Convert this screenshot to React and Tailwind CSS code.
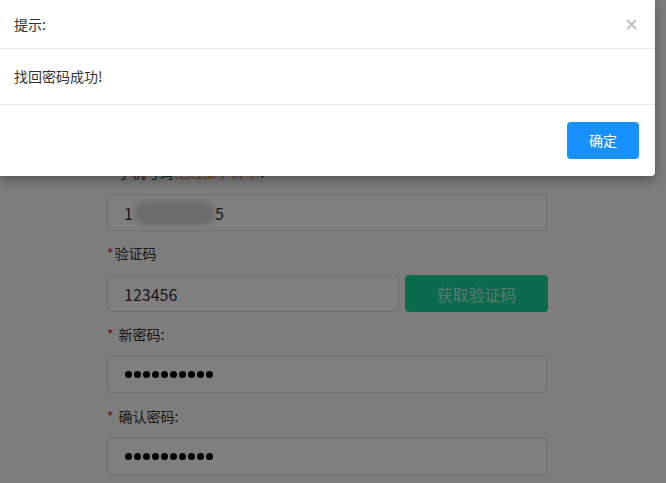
import React from "react";

function Dots() {
  return (
    <div className="flex items-center gap-[2px]">
      {Array.from({ length: 10 }).map((_, i) => (
        <span key={i} className="block w-[7px] h-[7px] rounded-full bg-black" />
      ))}
    </div>
  );
}

function Label({ children, star = true, space = false }) {
  return (
    <div className="h-[22px] flex items-center text-[14px] text-[#333]">
      {star && <span className="text-[#e02020] mr-[1px]">*</span>}
      {space && <span className="w-[4px]" />}
      {children}
    </div>
  );
}

export default function App() {
  const font = { fontFamily: '"Microsoft YaHei", "Noto Sans CJK SC", "Liberation Sans", sans-serif' };
  return (
    <div className="relative w-[666px] h-[483px] overflow-hidden bg-[#fafafa]" style={font}>
      {/* page form */}
      <div className="pl-[107px] pt-[161px] w-[547px] flex flex-col">
        <div className="h-[22px] flex items-center text-[14px] text-[#333]">
          <span className="text-[#e02020] mr-[4px]">*</span>
          手机号码<span className="text-[#e6772e] text-[13px]">(已注册手机号)</span>:
        </div>
        <div className="mt-[11px] h-[37px] w-[440px] border border-[#dcdfe6] rounded-[4px] bg-white flex items-center pl-[16px] text-[16px] text-[#333]">
          1
          <span className="inline-block w-[80px] h-[24px] rounded-[10px] bg-[#dadada] blur-[2px] mx-[1px]" />
          5
        </div>
        <div className="mt-[11px]">
          <Label>验证码</Label>
        </div>
        <div className="mt-[11px] flex gap-[6px] w-[441px]">
          <div className="h-[37px] w-[292px] border border-[#dcdfe6] rounded-[4px] bg-white flex items-center pl-[16px] text-[16px] text-[#333]">
            123456
          </div>
          <div className="h-[37px] w-[143px] rounded-[4px] bg-[#16d69a] flex items-center justify-center text-[16px] text-[#b8f2e0]">
            获取验证码
          </div>
        </div>
        <div className="mt-[11px]">
          <Label space>新密码:</Label>
        </div>
        <div className="mt-[11px] h-[37px] w-[440px] border border-[#dcdfe6] rounded-[4px] bg-white flex items-center pl-[17px]">
          <Dots />
        </div>
        <div className="mt-[12px]">
          <Label space>确认密码:</Label>
        </div>
        <div className="mt-[11px] h-[37px] w-[440px] border border-[#dcdfe6] rounded-[4px] bg-white flex items-center pl-[17px]">
          <Dots />
        </div>
      </div>

      {/* overlay */}
      <div className="absolute inset-0 bg-[rgba(0,0,0,0.5)]" />

      {/* dialog */}
      <div className="absolute left-0 top-0 w-[655px] h-[176px] bg-white rounded-br-[4px] shadow-[0_4px_12px_rgba(0,0,0,0.35)] flex flex-col">
        <div className="h-[49px] border-b border-[#e8e8e8] flex items-center justify-between pl-[14px] pr-[18px]">
          <span className="text-[14px] text-[#333]">提示:</span>
          <span className="text-[#c0c0c0]">
            <svg width="11" height="11" viewBox="0 0 11 11">
              <path d="M1 1L10 10M10 1L1 10" stroke="currentColor" strokeWidth="1.8" />
            </svg>
          </span>
        </div>
        <div className="h-[56px] border-b border-[#e8e8e8] flex items-center pl-[14px] text-[14px] text-[#333]">
          找回密码成功!
        </div>
        <div className="flex-1 flex items-start justify-end pr-[16px] pt-[17px]">
          <div className="w-[72px] h-[37px] bg-[#1890ff] rounded-[4px] flex items-center justify-center text-white text-[14px]">
            确定
          </div>
        </div>
      </div>
    </div>
  );
}
